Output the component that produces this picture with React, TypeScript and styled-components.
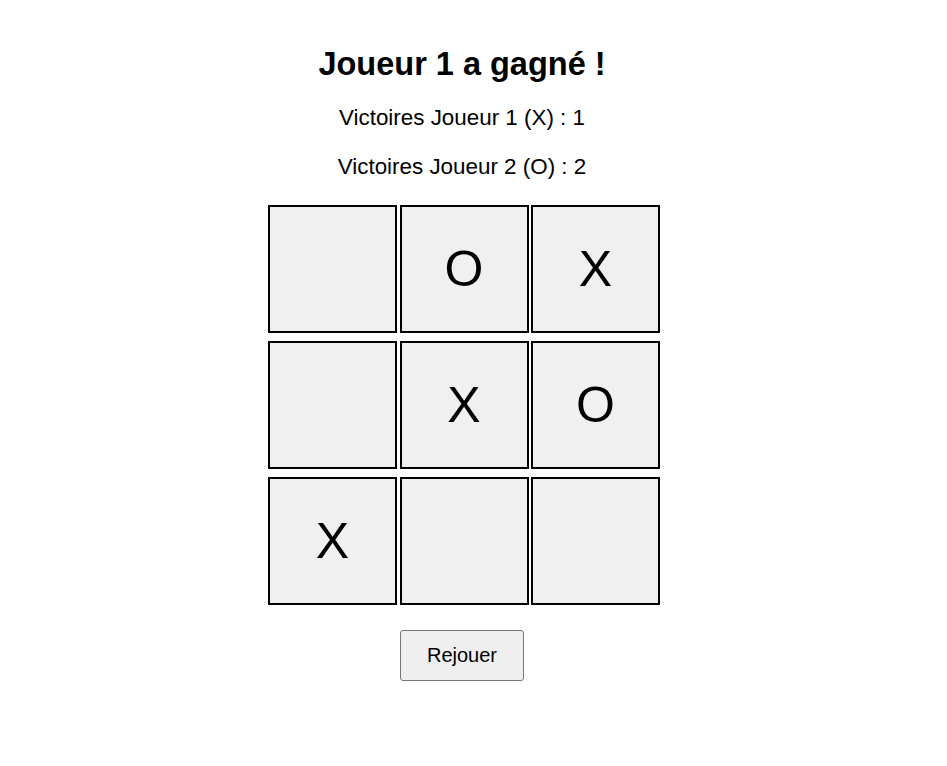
import React from "react";
import styled, { createGlobalStyle } from "styled-components";

const Global = createGlobalStyle`
  html, body {
    margin: 0;
    padding: 0;
    background: #ffffff;
  }
  body {
    margin: 8px;
    font-family: "Liberation Sans", Arial, sans-serif;
    color: #000000;
  }
`;

const Page = styled.div`
  display: flex;
  flex-direction: column;
  align-items: center;
  padding: 38px 23px 0 0;
`;

const Title = styled.h1`
  margin: 0;
  font-size: 32.5px;
  line-height: 36.8px;
  font-weight: 700;
`;

const Score = styled.p<{ $top: number }>`
  margin: ${(p) => p.$top}px 0 0;
  font-size: 22.4px;
  line-height: 25.76px;
`;

const Board = styled.div`
  display: grid;
  grid-template-columns: repeat(3, 129px);
  grid-auto-rows: 128px;
  column-gap: 2.5px;
  row-gap: 8px;
  margin: 25.6px 0 0 4px;
`;

const Cell = styled.div`
  box-sizing: border-box;
  display: flex;
  align-items: center;
  justify-content: center;
  border: 2px solid #000000;
  background: #f0f0f0;
  font-size: 50px;
  line-height: 1;
`;

const ReplayButton = styled.button`
  margin-top: 25px;
  padding: 13px 26px;
  font-family: "Liberation Sans", Arial, sans-serif;
  font-size: 20px;
  line-height: 23px;
  color: #000000;
  background: #efefef;
  border: 1px solid #767676;
  border-radius: 3px;
`;

const cells = ["", "O", "X", "", "X", "O", "X", "", ""];

export default function App() {
  return (
    <>
      <Global />
      <Page>
        <Title>Joueur 1 a gagné !</Title>
        <Score $top={22.6}>Victoires Joueur 1 (X) : 1</Score>
        <Score $top={22.4}>Victoires Joueur 2 (O) : 2</Score>
        <Board>
          {cells.map((c, i) => (
            <Cell key={i}>{c}</Cell>
          ))}
        </Board>
        <ReplayButton>Rejouer</ReplayButton>
      </Page>
    </>
  );
}
